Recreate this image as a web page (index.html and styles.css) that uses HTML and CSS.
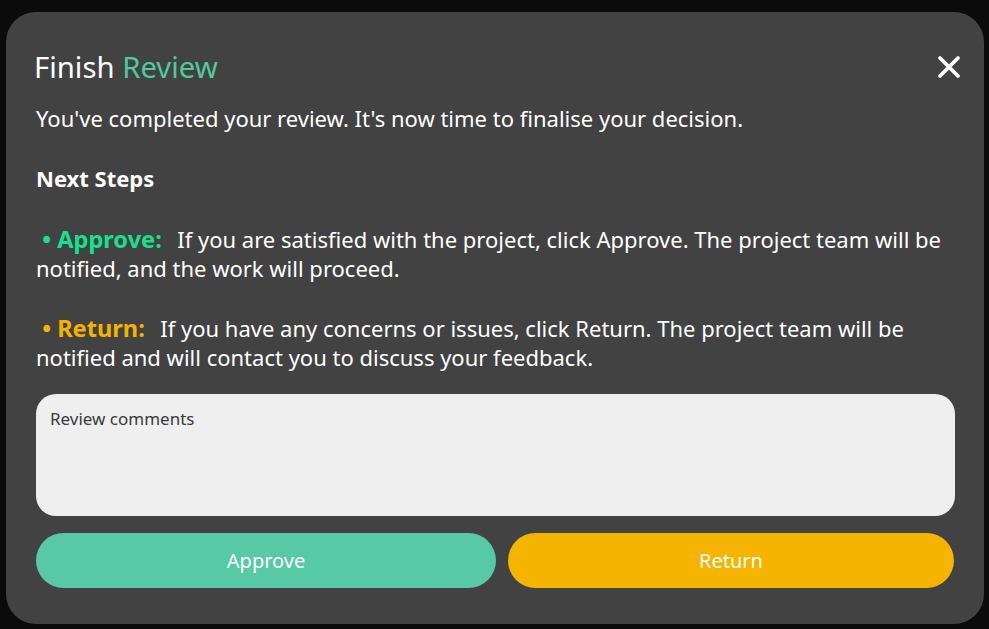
FILE: index.html
```html
<!DOCTYPE html>
<html lang="en">
<head>
<meta charset="utf-8">
<title>Finish Review</title>
<link rel="stylesheet" href="styles.css">
</head>
<body>
<div class="modal">
  <div class="modal-header">
    <h1 class="title">Finish <span class="accent">Review</span></h1>
    <button class="close" aria-label="Close">
      <svg width="24" height="24" viewBox="0 0 24 24"><path d="M3 3L21 21M21 3L3 21" stroke="#fff" stroke-width="3.8" stroke-linecap="round"/></svg>
    </button>
  </div>
  <p class="intro">You've completed your review. It's now time to finalise your decision.</p>
  <h2 class="steps">Next Steps</h2>
  <p class="step"><span class="label approve">&nbsp;• Approve:</span>&nbsp;&nbsp;If you are satisfied with the project, click Approve. The project team will be notified, and the work will proceed.</p>
  <p class="step"><span class="label return">&nbsp;• Return:</span>&nbsp;&nbsp;If you have any concerns or issues, click Return. The project team will be notified and will contact you to discuss your feedback.</p>
  <textarea class="comments" placeholder="Review comments"></textarea>
  <div class="actions">
    <button class="btn btn-approve">Approve</button>
    <button class="btn btn-return">Return</button>
  </div>
</div>
</body>
</html>
```
FILE: styles.css
```css
html, body {
  margin: 0;
  padding: 0;
  background: #0b0b0b;
}
body {
  padding: 12px 5px 5px 6px;
  font-family: "Noto Sans", "Open Sans", sans-serif;
  color: #fff;
}
.modal {
  box-sizing: border-box;
  width: 978px;
  height: 612px;
  background: #424242;
  border-radius: 30px;
  padding: 36px 29px 0 30px;
  display: flex;
  flex-direction: column;
}
.modal-header {
  display: flex;
  justify-content: space-between;
  align-items: center;
  height: 38px;
}
.title {
  margin: 0;
  font-size: 29.3px;
  font-weight: 400;
  line-height: 38px;
  color: #fff;
  margin-left: -2px;
}
.accent { color: #4fc99d; }
.close {
  background: none;
  border: 0;
  padding: 0;
  width: 24px;
  height: 24px;
  margin-right: -6px;
  cursor: pointer;
}
.close svg { display: block; }
.intro {
  margin: 18px 0 0;
  font-size: 22px;
  line-height: 29px;
}
.steps {
  margin: 31px 0 0;
  font-size: 22px;
  font-weight: 700;
  line-height: 29px;
}
.step {
  margin: 32px 0 0;
  font-size: 22px;
  line-height: 29px;
}
.step + .step { margin-top: 31px; }
.label {
  font-weight: 700;
  font-size: 23.6px;
  margin-right: 4px;
}
.approve { color: #18e08f; }
.return { color: #f5b300; }
.comments {
  box-sizing: border-box;
  margin-top: 22px;
  width: 919px;
  height: 122px;
  border: 0;
  border-radius: 20px;
  background: #efefef;
  padding: 13px 14px;
  font-family: "Noto Sans", "Open Sans", sans-serif;
  font-size: 17px;
  color: #333;
  resize: none;
  outline: none;
}
.comments::placeholder { color: #3a3a3a; opacity: 1; }
.actions {
  display: grid;
  grid-template-columns: 460px 446px;
  gap: 12px;
  margin-top: 17px;
}
.btn {
  height: 55px;
  border: 0;
  border-radius: 28px;
  color: #fff;
  font-family: "Noto Sans", "Open Sans", sans-serif;
  font-size: 20px;
  cursor: pointer;
}
.btn-approve { background: #57c9a5; }
.btn-return { background: #f5b400; }
```
